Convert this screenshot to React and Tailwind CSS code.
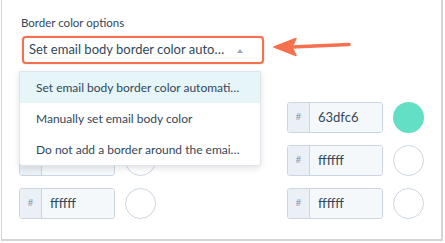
const font = { fontFamily: "Lato, 'Open Sans', sans-serif" };

const ColorField = ({ value, color }) => (
  <div className="flex items-center">
    <div className="flex h-[31px] w-[96px] rounded-[3px] border border-[#cbd6e2] overflow-hidden">
      <div className="w-[22px] bg-[#eaf0f6] border-r border-[#cbd6e2] flex items-center justify-center text-[10px] text-[#8da2b8] pb-[2px]">#</div>
      <div className="flex-1 bg-[#f5f8fa] flex items-center pl-[8px] text-[13px] text-[#33475b]">{value}</div>
    </div>
    <div
      className={
        color
          ? "ml-[10px] w-[31px] h-[31px] rounded-full bg-[#63dfc6]"
          : "ml-[10px] w-[31px] h-[31px] rounded-full border border-[#cbd6e2] bg-white"
      }
    />
  </div>
);

export default function App() {
  return (
    <div className="w-[445px] h-[243px] bg-white" style={font}>
      <div className="relative ml-[1px] w-[442px] h-[241px] bg-white border-l border-r-2 border-b-2 border-[#d4d4d4] pl-[17px] pt-[15px]">
        <div className="text-[11.5px] leading-[16px] text-[#33475b] ml-[2px]">Border color options</div>

        <div className="mt-[5px] ml-[3px] w-[242px] h-[28px] rounded-[4px] border-2 border-[#f4704f] bg-white flex items-center pl-[5px] pr-[18px] relative shadow-[0_0_2px_rgba(244,112,79,0.4)]">
          <span className="text-[13px] text-[#33475b] whitespace-nowrap">Set email body border color auto…</span>
          <span className="absolute right-[19px] top-[11px] w-0 h-0 border-l-[3.5px] border-r-[3.5px] border-b-[4px] border-l-transparent border-r-transparent border-b-[#99a9ba]" />
        </div>

        <svg className="absolute left-[268px] top-[34px]" width="84" height="26" viewBox="0 0 84 26">
          <line x1="22" y1="13" x2="79" y2="10.5" stroke="#f4704f" strokeWidth="3.6" strokeLinecap="round" />
          <polygon points="4,13 26,4.5 22,13 26,21.5" fill="#f4704f" stroke="#f4704f" strokeWidth="1.5" strokeLinejoin="round" />
        </svg>

        <div className="mt-[38px] grid grid-cols-[268px_1fr] gap-y-[12px]">
          <ColorField value="" />
          <ColorField value="63dfc6" color />
          <ColorField value="" />
          <ColorField value="ffffff" />
          <ColorField value="ffffff" />
          <ColorField value="ffffff" />
        </div>

        <div className="absolute left-[17px] top-[71px] w-[242px] bg-white border border-[#dfe3eb] rounded-b-[3px] shadow-[0_2px_6px_rgba(0,0,0,0.12)] text-[12px] text-[#33475b]">
          <div className="h-[31px] bg-[#e5f5f8] flex items-center pl-[16px] whitespace-nowrap">Set email body border color automati…</div>
          <div className="h-[31px] flex items-center pl-[16px] whitespace-nowrap">Manually set email body color</div>
          <div className="h-[31px] flex items-center pl-[16px] whitespace-nowrap">Do not add a border around the emai…</div>
        </div>
      </div>
    </div>
  );
}
